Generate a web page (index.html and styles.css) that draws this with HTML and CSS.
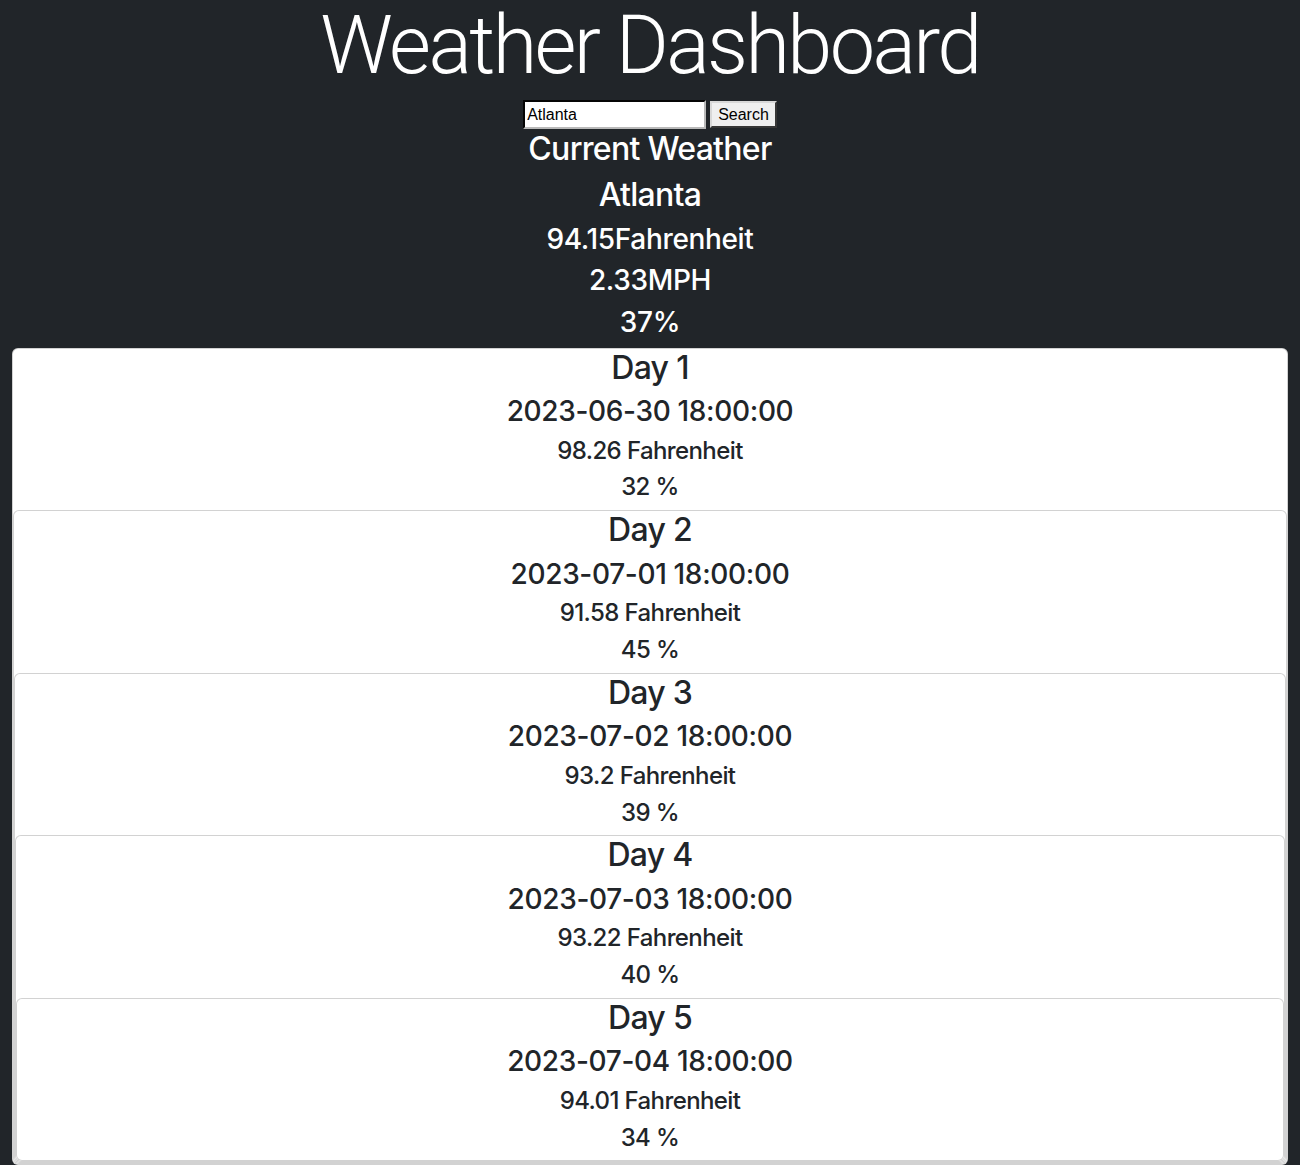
FILE: index.html
```html
<!DOCTYPE html>
<html lang="en">
<head>
<meta charset="utf-8">
<title>Weather Dashboard</title>
<link rel="stylesheet" href="styles.css">
</head>
<body>
<div class="app">
  <h1 class="title">Weather Dashboard</h1>
  <form class="search">
    <input class="search-input" type="text" value="Atlanta">
    <button class="search-btn" type="button">Search</button>
  </form>
  <h2 class="h2">Current Weather</h2>
  <h2 class="h2">Atlanta</h2>
  <h3 class="h3">94.15Fahrenheit</h3>
  <h3 class="h3">2.33MPH</h3>
  <h3 class="h3">37%</h3>

  <div class="card">
    <h2 class="h2">Day 1</h2>
    <h3 class="h3">2023-06-30 18:00:00</h3>
    <h4 class="h4">98.26 Fahrenheit</h4>
    <h4 class="h4">32 %</h4>
    <div class="card">
      <h2 class="h2">Day 2</h2>
      <h3 class="h3">2023-07-01 18:00:00</h3>
      <h4 class="h4">91.58 Fahrenheit</h4>
      <h4 class="h4">45 %</h4>
      <div class="card">
        <h2 class="h2">Day 3</h2>
        <h3 class="h3">2023-07-02 18:00:00</h3>
        <h4 class="h4">93.2 Fahrenheit</h4>
        <h4 class="h4">39 %</h4>
        <div class="card">
          <h2 class="h2">Day 4</h2>
          <h3 class="h3">2023-07-03 18:00:00</h3>
          <h4 class="h4">93.22 Fahrenheit</h4>
          <h4 class="h4">40 %</h4>
          <div class="card">
            <h2 class="h2">Day 5</h2>
            <h3 class="h3">2023-07-04 18:00:00</h3>
            <h4 class="h4">94.01 Fahrenheit</h4>
            <h4 class="h4">34 %</h4>
          </div>
        </div>
      </div>
    </div>
  </div>
</div>
</body>
</html>
```

FILE: styles.css
```css
html, body {
  margin: 0;
  padding: 0;
  background: #ffffff;
}

body {
  font-family: Inter, "Noto Sans", "Liberation Sans", sans-serif;
  color: #212529;
}

.app {
  background: #212529;
  color: #ffffff;
  padding: 0 12px;
  text-align: center;
}

.title {
  margin: 0 0 8px;
  font-family: Roboto, Inter, "Liberation Sans", sans-serif;
  font-size: 81px;
  font-weight: 300;
  line-height: 92px;
  letter-spacing: -2.6px;
}

.search {
  display: flex;
  justify-content: center;
  align-items: flex-start;
  gap: 4px;
  height: 30px;
  margin: 0;
}

.search-input {
  box-sizing: border-box;
  width: 183px;
  height: 29px;
  margin: 0;
  padding: 1px 2px;
  border: 2px inset #767676;
  border-color: #5a5a5a #b9b9b9 #b9b9b9 #5a5a5a;
  background: #ffffff;
  color: #000000;
  font-family: "Liberation Sans", Arial, sans-serif;
  font-size: 16px;
}

.search-btn {
  box-sizing: border-box;
  height: 27px;
  margin-top: 1px;
  padding: 1px 6px;
  border: 2px outset #c4c4c4;
  border-color: #d8d8d8 #8a8a8a #8a8a8a #d8d8d8;
  background: #efefef;
  color: #000000;
  font-family: "Liberation Sans", Arial, sans-serif;
  font-size: 16px;
}

.h2, .h3, .h4 {
  margin: 0 0 8px;
  font-weight: 500;
  line-height: 1.2;
  letter-spacing: -0.022em;
}

.h2 { font-size: 32px; }
.h3 { font-size: 28px; letter-spacing: -0.012em; }
.h4 { font-size: 24px; letter-spacing: -0.025em; }

.card {
  background: #ffffff;
  color: #212529;
  border: 1px solid rgba(0, 0, 0, 0.175);
  border-radius: 6px;
}
```
